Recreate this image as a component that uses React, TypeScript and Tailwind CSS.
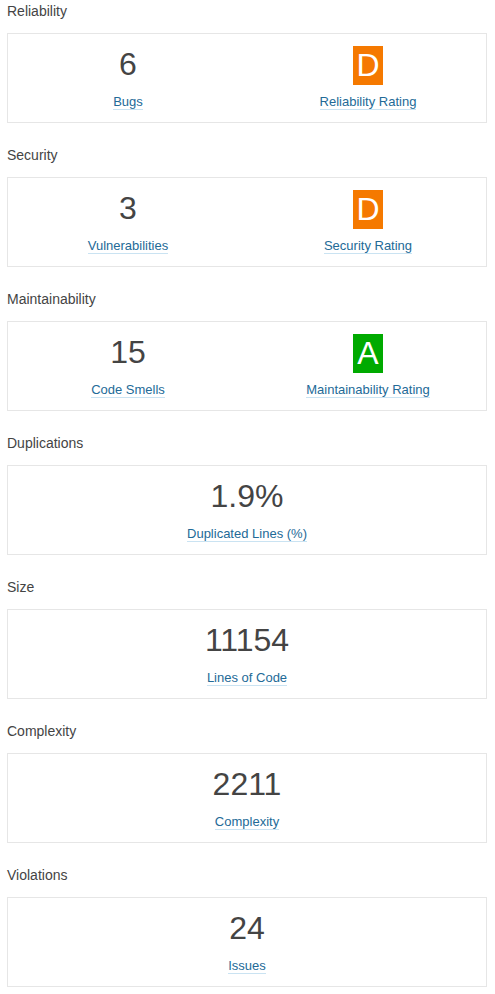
import React from "react";

type Item = { value: string; label: string; rating?: "A" | "D" };

const sections: { title: string; items: Item[] }[] = [
  { title: "Reliability", items: [{ value: "6", label: "Bugs" }, { value: "D", label: "Reliability Rating", rating: "D" }] },
  { title: "Security", items: [{ value: "3", label: "Vulnerabilities" }, { value: "D", label: "Security Rating", rating: "D" }] },
  { title: "Maintainability", items: [{ value: "15", label: "Code Smells" }, { value: "A", label: "Maintainability Rating", rating: "A" }] },
  { title: "Duplications", items: [{ value: "1.9%", label: "Duplicated Lines (%)" }] },
  { title: "Size", items: [{ value: "11154", label: "Lines of Code" }] },
  { title: "Complexity", items: [{ value: "2211", label: "Complexity" }] },
  { title: "Violations", items: [{ value: "24", label: "Issues" }] },
];

function Measure({ item, split }: { item: Item; split: boolean }) {
  return (
    <div className={(split ? "w-[240px] shrink-0 " : "flex-1 ") + "flex flex-col items-center"}>
      <div className="h-[32px] mt-[14px] flex items-center justify-center">
        {item.rating ? (
          <span
            className={
              "inline-flex items-center justify-center w-[30px] h-[39px] mt-[2px] text-white text-[32px] leading-none " +
              (item.rating === "A" ? "bg-[#00aa00]" : "bg-[#f57900]")
            }
          >
            {item.value}
          </span>
        ) : (
          <span className="text-[32px] leading-[32px] text-[#444444]">{item.value}</span>
        )}
      </div>
      <div className="mt-[12px] text-[13px] leading-5">
        <a href="#" className="text-[#236a97] border-b border-[#cae3f2] no-underline">
          {item.label}
        </a>
      </div>
    </div>
  );
}

export default function App() {
  return (
    <div className="w-[495px] h-[994px] bg-white pl-[7px] pr-[8px] pt-px font-['Liberation_Sans',Arial,sans-serif] text-[#444444]">
      {sections.map((s) => (
        <div key={s.title} className="mb-[22px]">
          <div className="h-[32px] text-[14px] leading-5">{s.title}</div>
          <div className="h-[90px] border border-[#e6e6e6] flex overflow-hidden">
            {s.items.map((it) => (
              <Measure key={it.label} item={it} split={s.items.length > 1} />
            ))}
          </div>
        </div>
      ))}
    </div>
  );
}
